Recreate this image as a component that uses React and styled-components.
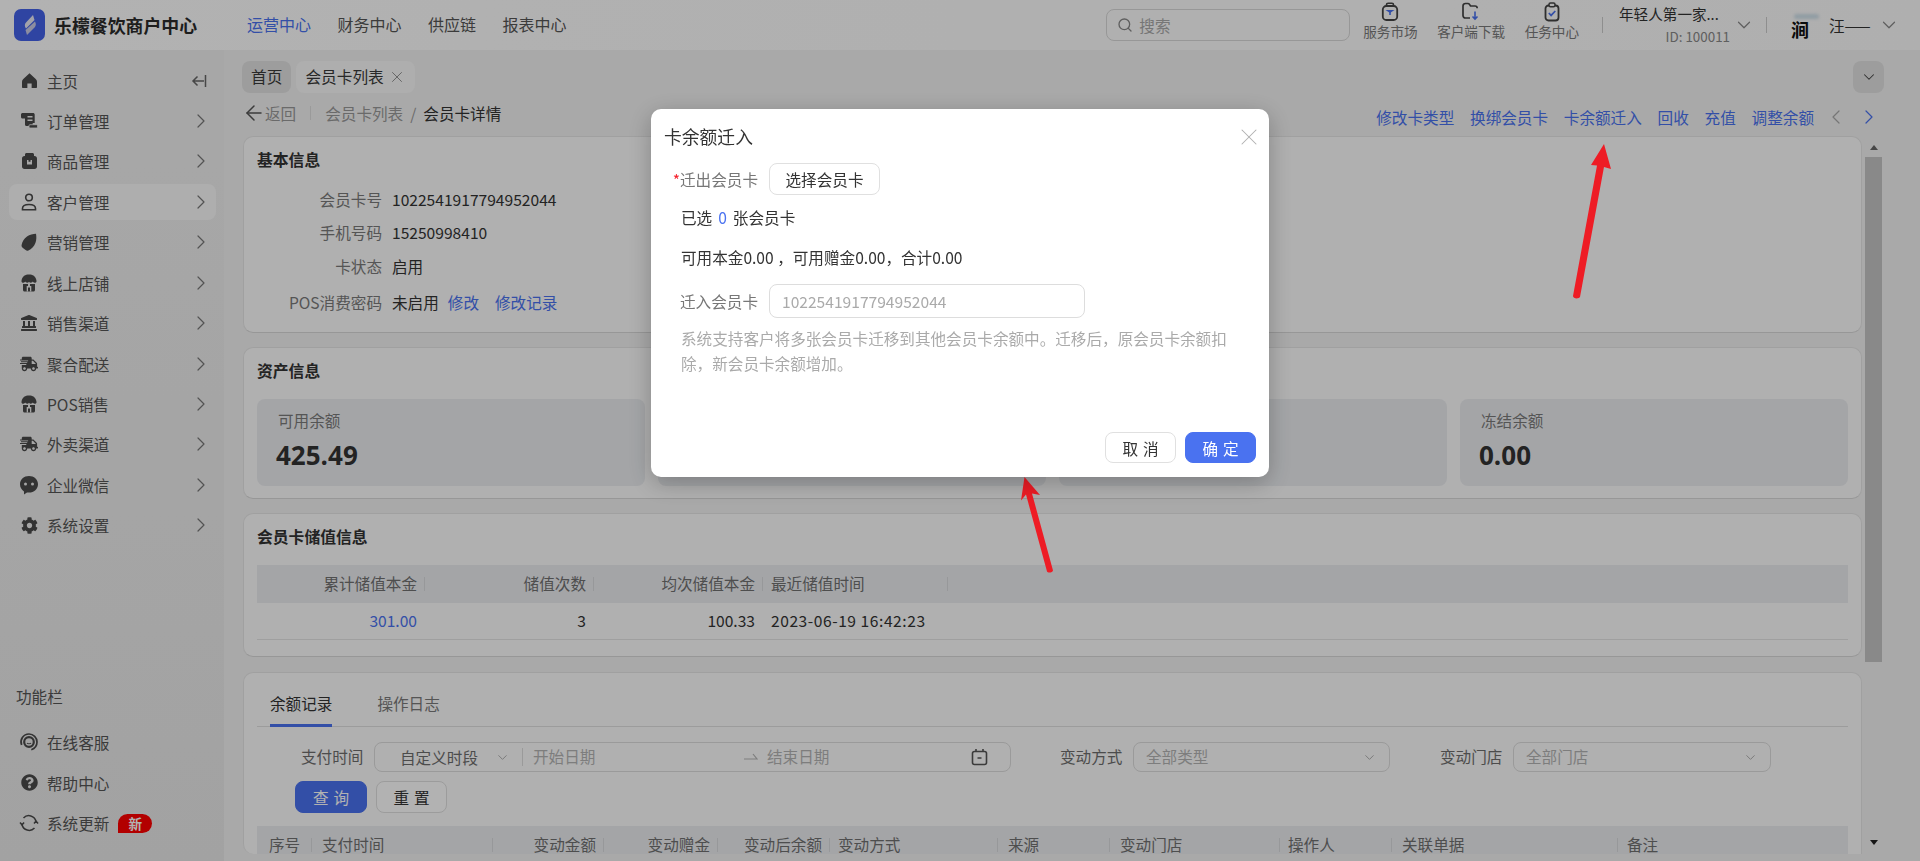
import React from "react";
import styled, { createGlobalStyle } from "styled-components";
import { ChevronRight, ChevronDown, ChevronLeft, X, Search, ArrowLeft } from "lucide-react";
import { FaShippingFast, FaCog, FaQuestionCircle, FaLandmark } from "react-icons/fa";

const BLUE = "#4a72f0";
const TINT = "#ebedf0";

const GlobalStyle = createGlobalStyle`
  html, body { margin: 0; padding: 0; height: 861px; overflow: hidden; }
  body { font-family: "Noto Sans CJK SC", "Liberation Sans", sans-serif; font-size: 15.6px; color: #333; }
  * { box-sizing: border-box; }
`;

const Page = styled.div`
  width: 1920px;
  height: 861px;
  display: flex;
  flex-direction: column;
  overflow: hidden;
  background: #f2f2f2;
`;

/* top bar */
const TopBar = styled.header`
  height: 50px;
  flex: none;
  display: flex;
  align-items: center;
  padding: 0 20px 0 14px;
  background: linear-gradient(90deg, #fff, #fbfbfb);
`;
const Logo = styled.svg`
  width: 31px;
  height: 32px;
  flex: none;
`;
const Brand = styled.div`
  margin-left: 9px;
  width: 143px;
  font-size: 17.9px;
  font-weight: 700;
  line-height: 26px;
  white-space: nowrap;
  color: #2b2b2b;
`;
const Nav = styled.nav`
  margin-left: 50px;
  display: flex;
  gap: 26.5px;
  flex: 1;
  margin-top: -3px;
`;
const NavItem = styled.span`
  font-size: 16px;
  line-height: 24px;
  color: ${(p) => (p.$active ? BLUE : "#555")};
`;
const SearchBox = styled.div`
  width: 244px;
  height: 32px;
  display: flex;
  align-items: center;
  gap: 6px;
  padding-left: 10px;
  border: 1px solid #d8d8d8;
  border-radius: 8px;
  color: #aaa;
  font-size: 15.6px;
  svg { color: #888; }
`;
const Tools = styled.div`
  margin-left: 13px;
  display: flex;
  gap: 19.5px;
  align-self: flex-start;
  padding-top: 2px;
`;
const Tool = styled.div`
  display: flex;
  flex-direction: column;
  align-items: center;
  font-size: 13.6px;
  line-height: 18px;
  color: #7a7a7a;
  white-space: nowrap;
  svg { display: block; height: 20px; }
`;
const VLine = styled.span`
  width: 1px;
  height: 16px;
  flex: none;
  background: #ccc;
  margin-left: ${(p) => p.$left || 0}px;
`;
const Shop = styled.div`
  margin-left: 16px;
  width: 111px;
  flex: none;
  display: flex;
  flex-direction: column;
  font-size: 14.6px;
  line-height: 22px;
  color: #333;
  white-space: nowrap;
`;
const ShopId = styled.span`
  text-align: right;
  font-size: 13.4px;
  color: #888;
`;
const Avatar = styled.div`
  margin-left: 22px;
  width: 31px;
  height: 26px;
  flex: none;
  position: relative;
  padding: 8px 0 0 2px;
  font-size: 18px;
  font-weight: 700;
  line-height: 18px;
  color: #111;
  &::before {
    content: "";
    position: absolute;
    top: 2px;
    left: 5px;
    width: 25px;
    height: 5px;
    border-radius: 4px;
    background: #cfe0ea;
    filter: blur(1.5px);
  }
`;
const UserName = styled.span`
  margin-left: 9px;
  width: 47px;
  flex: none;
  font-size: 15.6px;
  white-space: nowrap;
  color: #333;
`;
const DownIcon = styled(ChevronDown)`
  flex: none;
  color: #888;
  margin-left: ${(p) => p.$left || 0}px;
`;

/* sidebar */
const Body = styled.div`
  flex: 1;
  display: flex;
  min-height: 0;
`;
const Sidebar = styled.aside`
  width: 224px;
  flex: none;
  display: flex;
  flex-direction: column;
  justify-content: space-between;
  padding: 12.5px 8px 20px 9px;
  background: linear-gradient(#f0f0f0, #e9e9e9);
`;
const Menu = styled.div`
  display: flex;
  flex-direction: column;
  gap: 4.45px;
`;
const MenuItem = styled.div`
  height: 36px;
  display: flex;
  align-items: center;
  padding: 0 3px 0 10px;
  border-radius: 8px;
  background: ${(p) => (p.$active ? "#f9f9f9" : "transparent")};
  color: #555;
  font-size: 15.6px;
`;
const MenuIcon = styled.span`
  width: 20px;
  height: 20px;
  display: flex;
  align-items: center;
  justify-content: center;
  color: #4a4a4a;
  svg { display: block; }
`;
const MenuLabel = styled.span`
  margin-left: 8px;
  flex: 1;
  white-space: nowrap;
  display: flex;
  align-items: center;
  gap: 9px;
`;
const MenuArrow = styled(ChevronRight)`
  color: #777;
`;
const CollapseIcon = styled.svg`
  width: 16px;
  height: 14px;
  margin-right: 6px;
`;
const FooterTitle = styled.div`
  padding-left: 7px;
  margin-bottom: 17px;
  font-size: 15.6px;
  line-height: 22px;
  color: #555;
`;
const NewBadge = styled.span`
  width: 34px;
  height: 19px;
  display: flex;
  align-items: center;
  justify-content: center;
  border-radius: 10px 10px 10px 0;
  background: #ff0000;
  color: #fff;
  font-size: 13.6px;
  font-weight: 700;
`;

/* main */
const Main = styled.main`
  flex: 1;
  min-width: 0;
  padding-left: 18px;
  display: flex;
  flex-direction: column;
`;
const PageTabs = styled.div`
  margin-top: 11px;
  height: 32px;
  flex: none;
  display: flex;
  gap: 5px;
  padding-right: 36px;
`;
const PageTab = styled.div`
  height: 32px;
  display: flex;
  align-items: center;
  gap: 4px;
  padding: 0 9px 2px;
  border-radius: 8px;
  background: ${(p) => (p.$active ? "#f9f9f9" : "#e1e1e1")};
  font-size: 15.7px;
  color: #3a3a3a;
  svg { color: #888; margin-top: 2px; }
`;
const TabsMore = styled.div`
  margin-left: auto;
  width: 31px;
  height: 32px;
  display: flex;
  align-items: center;
  justify-content: center;
  border-radius: 8px;
  background: #e1e1e1;
  color: #444;
`;
const Crumbs = styled.div`
  height: 43px;
  flex: none;
  display: flex;
  align-items: center;
  padding: 0 39px 4px 0;
`;
const Back = styled.span`
  display: flex;
  align-items: center;
  gap: 0;
  color: #999;
  svg { color: #555; margin-right: -1px; }
`;
const CrumbLine = styled.span`
  width: 1px;
  height: 14px;
  margin: 0 14px;
  background: #ddd;
`;
const CrumbLink = styled.span`
  color: ${(p) => (p.$current ? "#333" : "#999")};
  margin-right: ${(p) => (p.$current ? 0 : 7)}px;
`;
const Actions = styled.div`
  margin-left: auto;
  display: flex;
  align-items: center;
  gap: 15.8px;
  padding-top: 9px;
`;
const Link = styled.a`
  color: ${BLUE};
  white-space: nowrap;
  margin-left: ${(p) => p.$left || 0}px;
`;
const Pager = styled.span`
  display: flex;
  gap: 9px;
  margin-left: -5.8px;
`;
const Viewport = styled.div`
  height: 718px;
  flex: none;
  display: flex;
  padding-left: 1px;
`;
const Scroller = styled.div`
  width: 1619px;
  flex: none;
  overflow: hidden;
  display: flex;
  flex-direction: column;
  gap: 14px;
`;
const FakeScroll = styled.div`
  width: 17px;
  margin-left: 3px;
  position: relative;
  display: flex;
  flex-direction: column;
  align-items: center;
`;
const ScrollArrow = styled.span`
  width: 0;
  height: 0;
  margin: ${(p) => (p.$down ? "auto 0 9px" : "9px 0 0")};
  border-left: 4.5px solid transparent;
  border-right: 4.5px solid transparent;
  border-${(p) => (p.$down ? "top" : "bottom")}: 5px solid ${(p) => (p.$down ? "#222" : "#666")};
`;
const ScrollThumb = styled.span`
  width: 17px;
  height: 505px;
  margin-top: 7px;
  background: #c4c4c4;
`;
const Card = styled.section`
  height: ${(p) => p.$h}px;
  flex: none;
  margin-top: ${(p) => p.$top || 0}px;
  padding: 0 13px;
  background: #fcfcfc;
  border: 1px solid #e6e6e6;
  border-bottom: ${(p) => (p.$open ? "none" : "1px solid #d8d8d8")};
  border-radius: ${(p) => (p.$open ? "10px 10px 0 10px" : "10px")};
`;
const CardTitle = styled.h3`
  margin: 11px 0 16px;
  font-size: 15.8px;
  font-weight: 700;
  line-height: 24px;
  color: #333;
`;
const InfoList = styled.dl`
  margin: -6.500px 0 0;
  padding-top: 1px;
`;
const InfoRow = styled.div`
  display: grid;
  grid-template-columns: 125px 1fr;
  column-gap: 10px;
  height: ${(p) => p.$h}px;
  align-items: center;
`;
const InfoLabel = styled.dt`
  text-align: right;
  color: #7a7a7a;
  white-space: nowrap;
`;
const InfoValue = styled.dd`
  margin: 0;
  color: #333;
  display: flex;
  gap: 9px;
`;
const Stats = styled.div`
  display: grid;
  grid-template-columns: repeat(4, 1fr);
  gap: 13px;
`;
const Stat = styled.div`
  height: 87px;
  padding: 10px 21px;
  background: ${TINT};
  border-radius: 8px;
`;
const StatLabel = styled.div`
  line-height: 22px;
  color: #7a7a7a;
`;
const StatValue = styled.div`
  margin-top: 6px;
  margin-left: -2px;
  font-family: "Open Sans", "Noto Sans CJK SC", sans-serif;
  font-size: 26px;
  font-weight: 700;
  line-height: 36px;
  color: #333;
`;
const Thead = styled.div`
  display: grid;
  grid-template-columns: ${(p) => p.$cols};
  height: ${(p) => p.$h}px;
  padding-top: ${(p) => p.$top || 0}px;
  background: ${TINT};
  color: #707070;
`;
const Tbody = styled.div`
  display: grid;
  grid-template-columns: ${(p) => p.$cols};
  height: 37px;
  align-items: center;
  border-bottom: 1px solid #e4e4e4;
  color: #333;
`;
const Th = styled.div`
  height: 100%;
  position: relative;
  display: flex;
  align-items: center;
  justify-content: ${(p) => (p.$right ? "flex-end" : "flex-start")};
  padding: 0 8px 2px ${(p) => (p.$pad === undefined ? 8 : p.$pad)}px;
  line-height: 16px;
  white-space: nowrap;
  &::after {
    content: "";
    display: ${(p) => (p.$last ? "none" : "block")};
    position: absolute;
    right: 0;
    top: 50%;
    width: 1px;
    height: 14px;
    margin-top: -7px;
    background: #d8dadd;
  }
`;
const Td = styled.div`
  padding: 0 8px 2px;
  text-align: ${(p) => (p.$right ? "right" : "left")};
  color: ${(p) => (p.$link ? BLUE : "#333")};
  letter-spacing: ${(p) => p.$track || 0}px;
  white-space: nowrap;
`;
const TabRow = styled.div`
  height: 54px;
  display: flex;
  align-items: flex-end;
  gap: 45px;
  padding-left: 13px;
  border-bottom: 1px solid #e0e0e0;
`;
const Tab = styled.div`
  height: 40px;
  margin-bottom: -1px;
  padding-top: 4px;
  line-height: 24px;
  border-bottom: 3px solid ${(p) => (p.$active ? BLUE : "transparent")};
  color: ${(p) => (p.$active ? "#333" : "#7a7a7a")};
`;
const Filters = styled.div`
  height: 30px;
  margin-top: 15px;
  padding-left: 44px;
  display: flex;
  align-items: center;
  line-height: 20px;
`;
const FilterLabel = styled.label`
  width: 65px;
  flex: none;
  padding-bottom: 2px;
  white-space: nowrap;
  color: #6e6e6e;
  margin-left: ${(p) => p.$left || 0}px;
`;
const RangeBox = styled.div`
  width: 637px;
  height: 30px;
  margin-left: 8px;
  display: flex;
  align-items: center;
  border: 1px solid #ddd;
  border-radius: 8px;
`;
const Preset = styled.div`
  width: 148px;
  height: 18px;
  padding-left: 25px;
  flex: none;
  display: flex;
  align-items: center;
  color: #6e6e6e;
  border-right: 1px solid #ddd;
  white-space: nowrap;
  line-height: 18px;
  svg { color: #aaa; margin-left: 17px; }
`;
const Placeholder = styled.span`
  color: #b4b4b4;
  white-space: nowrap;
  flex: ${(p) => (p.$grow ? 1 : "none")};
  width: ${(p) => (p.$w ? `${p.$w}px` : "auto")};
  padding: 0 0 2px ${(p) => p.$pad || 0}px;
`;
const RangeArrow = styled.svg`
  width: 14px;
  height: 10px;
  flex: none;
`;
const CalendarIcon = styled.svg`
  width: 17px;
  height: 18px;
  flex: none;
  margin-right: 22px;
`;
const SelectBox = styled.div`
  width: ${(p) => p.$w}px;
  height: 30px;
  margin-left: 8px;
  padding: 0 12px;
  display: flex;
  align-items: center;
  justify-content: space-between;
  border: 1px solid #ddd;
  border-radius: 8px;
  svg { color: #aaa; }
`;
const FilterButtons = styled.div`
  margin-top: 9px;
  margin-bottom: 13px;
  padding-left: 38px;
  display: flex;
  gap: 9px;
`;
const Button = styled.button`
  width: ${(p) => p.$w || 72}px;
  height: ${(p) => p.$h || 32}px;
  padding: 0 0 0 ${(p) => p.$space || 0}px;
  flex: none;
  font: inherit;
  letter-spacing: ${(p) => p.$space || 0}px;
  white-space: nowrap;
  border-radius: 8px;
  border: 1px solid ${(p) => (p.$primary ? BLUE : "#e0e0e0")};
  background: ${(p) => (p.$primary ? BLUE : "#fff")};
  color: ${(p) => (p.$primary ? "#fff" : "#333")};
`;

/* dialog */
const Mask = styled.div`
  position: fixed;
  inset: 0;
  z-index: 10;
  padding: 109px 0 0 651px;
  background: rgba(0, 0, 0, 0.3);
`;
const Dialog = styled.div`
  position: relative;
  z-index: 1;
  width: 618px;
  height: 368px;
  display: flex;
  flex-direction: column;
  padding: 14px 13px 14px 13px;
  background: #fff;
  border-radius: 10px;
  box-shadow: 0 6px 24px rgba(0, 0, 0, 0.25);
`;
const DialogHead = styled.div`
  height: 26px;
  flex: none;
  display: flex;
  align-items: center;
  justify-content: space-between;
  font-size: 17.8px;
  line-height: 26px;
  color: #333;
  svg { color: #b0b0b0; margin-right: -7px; margin-top: 2px; }
`;
const FormRow = styled.div`
  display: flex;
  align-items: center;
  height: ${(p) => p.$h}px;
  margin-top: ${(p) => p.$top}px;
`;
const FormLabel = styled.span`
  width: 94px;
  flex: none;
  text-align: right;
  color: #777;
  white-space: nowrap;
  margin-right: 11px;
  em { color: #f5222d; font-style: normal; }
`;
const FormInput = styled.div`
  width: 316px;
  height: 34px;
  padding-left: 12px;
  display: flex;
  align-items: center;
  border: 1px solid #ddd;
  border-radius: 8px;
  color: #aaa;
`;
const Note = styled.div`
  margin-top: ${(p) => p.$top}px;
  padding-left: 17px;
  line-height: 22px;
  color: #333;
  white-space: nowrap;
`;
const Count = styled.span`
  color: ${BLUE};
  margin: 0 6px;
`;
const Help = styled.div`
  margin-top: 7.500px;
  padding-left: 17px;
  width: 575px;
  line-height: 25px;
  color: #aaa;
`;
const DialogFoot = styled.div`
  margin-top: auto;
  display: flex;
  justify-content: flex-end;
  gap: 9px;
`;
const Arrow = styled.svg`
  position: absolute;
  top: 0;
  left: 0;
  width: 1920px;
  height: 861px;
  pointer-events: none;
`;

const paint = "currentColor";

const HomeIcon = () => (
  <svg width="15" height="15" viewBox="0 0 14 14" fill={paint}>
    <path d="M7 .3l5.800 5.400c.8.700 1.200 1.500 1.200 2.400V13c0 .6-.4 1-1 1H9V9.800H5V14H1c-.6 0-1-.4-1-1V8.100c0-.9.4-1.700 1.200-2.400z" />
  </svg>
);
const OrderIcon = () => (
  <svg width="18" height="17" viewBox="0 0 18 17" fill={paint}>
    <path d="M1 2.500C1 1.500 1.800 1 2.700 1H13c1 0 1.700.7 1.700 1.700V11h-2V14H6.500C5.500 14 5 13.300 5 12.500V6.500H2.500C1.600 6.500 1 5.900 1 5z" />
    <path d="M7.500 4h5v1.600h-5zM7.500 7.400h5V9h-5z" fill="#efefef" />
    <rect x="9" y="12.700" width="8.500" height="3.300" rx="1" stroke="#efefef" strokeWidth=".8" />
  </svg>
);
const BagIcon = () => (
  <svg width="15" height="16" viewBox="0 0 15 16" fill={paint}>
    <path fillRule="evenodd" d="M3 1.500C3 .7 3.700 0 4.500 0h6c.8 0 1.500.7 1.500 1.500V3h.5C14 3 15 4 15 5.500v8c0 1.400-1 2.500-2.500 2.500h-10C1 16 0 14.900 0 13.500v-8C0 4 1 3 2.500 3H3zM5 7v4.500h5V7H8.500v1.800h-2V7z" />
  </svg>
);
const PersonIcon = () => (
  <svg width="16" height="18" viewBox="0 0 16 18" fill="none" stroke={paint} strokeWidth="1.600">
    <circle cx="8" cy="4.500" r="3.300" />
    <path d="M1.500 16.700v-1.200c0-2.400 2.200-4 6.500-4s6.500 1.600 6.500 4v1.200z" />
  </svg>
);
const TagIcon = () => (
  <svg width="16" height="18" viewBox="0 0 16 18" fill={paint}>
    <path d="M15 .8c.5 3 .6 6-.6 9.300-1.300 3.300-3.900 6.200-7 7.400-1 .4-2 .2-2.800-.4l-3-2.400C.7 14 .4 13 .6 12 1.300 8.500 3 5.500 6 3.500 8.700 1.700 12 .9 15 .8z" />
  </svg>
);
const StoreIcon = () => (
  <svg width="18" height="18" viewBox="0 0 18 18" fill={paint}>
    <path d="M9 .5c3.700 0 6.700 1.600 7.500 6.200.2 1.300-.7 2.100-1.800 2.100-1 0-1.600-.6-1.900-1.200-.4.700-1.100 1.200-2 1.200-.8 0-1.400-.4-1.800-1.100-.4.700-1 1.100-1.800 1.100-.9 0-1.600-.5-2-1.200-.3.600-.9 1.200-1.900 1.200-1.100 0-2-.8-1.800-2.100C2.300 2.100 5.300.5 9 .5z" />
    <path d="M3 10h5v7.500H4.500c-.8 0-1.500-.7-1.500-1.500zM10 10h5v6c0 .8-.7 1.500-1.500 1.500H10z" />
    <path d="M6.700 12h4.600v5.500H6.700z" fill="#efefef" />
    <path d="M8 13.500h2v4H8z" />
  </svg>
);
const WeChatIcon = () => (
  <svg width="20" height="20" viewBox="0 0 20 20" fill={paint}>
    <path fillRule="evenodd" d="M10 1c5 0 9 3.500 9 8.300 0 4.800-4 8.300-9 8.300-.7 0-1.400-.1-2-.2L5 19.500v-3.100C2.500 14.900 1 12.300 1 9.300 1 4.500 5 1 10 1zM6.500 7.500a1.500 1.500 0 100 3 1.500 1.500 0 000-3zm7 0a1.500 1.500 0 100 3 1.500 1.500 0 000-3z" />
  </svg>
);
const ServiceIcon = () => (
  <svg width="20" height="20" viewBox="0 0 20 20" fill="none" stroke={paint} strokeWidth="1.700">
    <path d="M2.600 13A8 8 0 0 1 10 2a8 8 0 0 1 8 8c0 3.700-2.300 6.500-5.700 7.700" />
    <circle cx="10" cy="10" r="4.800" strokeWidth="2.200" />
    <path d="M8 11c.7 1 3.300 1 4 0" strokeWidth="1.100" />
  </svg>
);
const SyncIcon = () => (
  <svg width="20" height="20" viewBox="0 0 20 20" fill="none" stroke={paint} strokeWidth="1.500">
    <path d="M3 11.500A7.300 7.300 0 0 0 15.500 15M17 8.500A7.300 7.300 0 0 0 4.500 5" />
    <path d="M1 9.500l2 2.300 2.100-2.300M15 10.500l2-2.300 2.100 2.300" />
  </svg>
);

const menuItems = [
  { label: "主页", icon: HomeIcon, collapse: true },
  { label: "订单管理", icon: OrderIcon },
  { label: "商品管理", icon: BagIcon },
  { label: "客户管理", icon: PersonIcon, active: true },
  { label: "营销管理", icon: TagIcon },
  { label: "线上店铺", icon: StoreIcon },
  { label: "销售渠道", icon: () => <FaLandmark size={16} /> },
  { label: "聚合配送", icon: () => <FaShippingFast size={18} /> },
  { label: "POS销售", icon: StoreIcon },
  { label: "外卖渠道", icon: () => <FaShippingFast size={18} /> },
  { label: "企业微信", icon: WeChatIcon },
  { label: "系统设置", icon: () => <FaCog size={17} /> },
];

const balanceCols = "168px 169px 169px 185px 1fr";
const recordCols = "55px 181px 111px 114px 112px 168px 112px 170px 112px 226px 1fr";

const recordHeads = [
  { label: "序号", pad: 12 },
  { label: "支付时间", pad: 10 },
  { label: "变动金额", right: true },
  { label: "变动赠金", right: true },
  { label: "变动后余额", right: true },
  { label: "变动方式" },
  { label: "来源", pad: 10 },
  { label: "变动门店", pad: 10 },
  { label: "操作人" },
  { label: "关联单据", pad: 10 },
  { label: "备注", pad: 9, last: true },
];

const info = [
  { label: "会员卡号", value: "1022541917794952044", h: 33 },
  { label: "手机号码", value: "15250998410", h: 33 },
  { label: "卡状态", value: "启用", h: 35 },
];

const App = () => (
  <Page>
    <GlobalStyle />
    <TopBar>
      <Logo viewBox="0 0 31 32">
        <rect width="31" height="32" rx="7" fill="#4462e8" />
        <path d="M19 6l1.500 5-8.500 8.500c-1.500-2-1.600-4.500 0-6z" fill="#e8e8f4" />
        <path d="M21 12.500c1.300 2.200 1 4.500-.5 6L13 26l-1.500-5z" fill="#c9cbe6" />
      </Logo>
      <Brand>乐檬餐饮商户中心</Brand>
      <Nav>
        <NavItem $active>运营中心</NavItem>
        <NavItem>财务中心</NavItem>
        <NavItem>供应链</NavItem>
        <NavItem>报表中心</NavItem>
      </Nav>
      <SearchBox>
        <Search size={16} strokeWidth={2} />
        搜索
      </SearchBox>
      <Tools>
        <Tool>
          <svg width="18" height="20" viewBox="0 0 18 20" fill="none">
            <path d="M5.500 4V2.800c0-.9.700-1.600 1.600-1.600h3.800c.9 0 1.600.7 1.600 1.600V4" stroke="#444" strokeWidth="1.600" />
            <rect x="1.800" y="4" width="14.400" height="14" rx="3.500" stroke="#444" strokeWidth="1.800" />
            <path d="M4.500 8h9l-4.500 3z" fill={BLUE} />
            <path d="M9 10v3" stroke={BLUE} strokeWidth="1.600" />
          </svg>
          服务市场
        </Tool>
        <Tool>
          <svg width="20" height="20" viewBox="0 0 20 20" fill="none">
            <path d="M9 16H4.500C3 16 2 15 2 13.500V4c0-1.500 1-2.500 2.500-2.500h2.300c.7 0 1.300.3 1.700.9L9.500 4h4.500c1.200 0 2.200.9 2.200 2.200" stroke="#444" strokeWidth="1.700" />
            <path d="M14 9.500v7M11.500 14.500L14 17l2.500-2.500" stroke={BLUE} strokeWidth="1.600" />
          </svg>
          客户端下载
        </Tool>
        <Tool>
          <svg width="16" height="20" viewBox="0 0 16 20" fill="none">
            <rect x="1.500" y="3.500" width="13" height="15" rx="3" stroke="#444" strokeWidth="1.800" />
            <rect x="5" y="1" width="6" height="3.800" rx="1.500" fill="#fbfbfb" stroke="#444" strokeWidth="1.500" />
            <path d="M4.800 11l2.300 2.400 4.200-4.400" stroke={BLUE} strokeWidth="1.700" />
          </svg>
          任务中心
        </Tool>
      </Tools>
      <VLine $left={23} />
      <Shop>
        <span>年轻人第一家...</span>
        <ShopId>ID: 100011</ShopId>
      </Shop>
      <DownIcon size={22} strokeWidth={1.300} $left={3} />
      <VLine $left={11} />
      <Avatar>涧</Avatar>
      <UserName>汪——</UserName>
      <DownIcon size={22} strokeWidth={1.300} $left={2} />
    </TopBar>

    <Body>
      <Sidebar>
        <Menu>
          {menuItems.map(({ label, icon: Icon, active, collapse }) => (
            <MenuItem key={label} $active={active}>
              <MenuIcon>
                <Icon />
              </MenuIcon>
              <MenuLabel>{label}</MenuLabel>
              {collapse ? (
                <CollapseIcon viewBox="0 0 16 14" fill="none" stroke="#666" strokeWidth="1.500">
                  <path d="M14.500 1v12M13 7H2M6.500 2.500L2 7l4.500 4.500" />
                </CollapseIcon>
              ) : (
                <MenuArrow size={24} strokeWidth={1.200} />
              )}
            </MenuItem>
          ))}
        </Menu>
        <div>
          <FooterTitle>功能栏</FooterTitle>
          <Menu>
            <MenuItem>
              <MenuIcon>
                <ServiceIcon />
              </MenuIcon>
              <MenuLabel>在线客服</MenuLabel>
            </MenuItem>
            <MenuItem>
              <MenuIcon>
                <FaQuestionCircle size={17} />
              </MenuIcon>
              <MenuLabel>帮助中心</MenuLabel>
            </MenuItem>
            <MenuItem>
              <MenuIcon>
                <SyncIcon />
              </MenuIcon>
              <MenuLabel>
                系统更新
                <NewBadge>新</NewBadge>
              </MenuLabel>
            </MenuItem>
          </Menu>
        </div>
      </Sidebar>

      <Main>
        <PageTabs>
          <PageTab>首页</PageTab>
          <PageTab $active>
            会员卡列表
            <X size={18} strokeWidth={1.200} />
          </PageTab>
          <TabsMore>
            <ChevronDown size={18} strokeWidth={1.400} />
          </TabsMore>
        </PageTabs>
        <Crumbs>
          <Back>
            <ArrowLeft size={24} strokeWidth={1.500} />
            返回
          </Back>
          <CrumbLine />
          <CrumbLink>会员卡列表</CrumbLink>
          <CrumbLink>/</CrumbLink>
          <CrumbLink $current>会员卡详情</CrumbLink>
          <Actions>
            <Link>修改卡类型</Link>
            <Link>换绑会员卡</Link>
            <Link>卡余额迁入</Link>
            <Link>回收</Link>
            <Link>充值</Link>
            <Link>调整余额</Link>
            <Pager>
              <ChevronLeft size={24} strokeWidth={1.200} color="#aaa" />
              <ChevronRight size={24} strokeWidth={1.200} color={BLUE} />
            </Pager>
          </Actions>
        </Crumbs>

        <Viewport>
          <Scroller>
            <Card $h={197}>
              <CardTitle>基本信息</CardTitle>
              <InfoList>
                {info.map(({ label, value, h }) => (
                  <InfoRow key={label} $h={h}>
                    <InfoLabel>{label}</InfoLabel>
                    <InfoValue>{value}</InfoValue>
                  </InfoRow>
                ))}
                <InfoRow $h={36}>
                  <InfoLabel>POS消费密码</InfoLabel>
                  <InfoValue>
                    未启用
                    <Link>修改</Link>
                    <Link $left={7}>修改记录</Link>
                  </InfoValue>
                </InfoRow>
              </InfoList>
            </Card>

            <Card $h={152}>
              <CardTitle>资产信息</CardTitle>
              <Stats>
                <Stat>
                  <StatLabel>可用余额</StatLabel>
                  <StatValue>425.49</StatValue>
                </Stat>
                <Stat>
                  <StatLabel>可用本金</StatLabel>
                </Stat>
                <Stat>
                  <StatLabel>可用赠金</StatLabel>
                </Stat>
                <Stat>
                  <StatLabel>冻结余额</StatLabel>
                  <StatValue>0.00</StatValue>
                </Stat>
              </Stats>
            </Card>

            <Card $h={144}>
              <CardTitle>会员卡储值信息</CardTitle>
              <Thead $cols={balanceCols} $h={38}>
                <Th $right>累计储值本金</Th>
                <Th $right>储值次数</Th>
                <Th $right>均次储值本金</Th>
                <Th>最近储值时间</Th>
                <Th $last />
              </Thead>
              <Tbody $cols={balanceCols}>
                <Td $right $link>
                  301.00
                </Td>
                <Td $right>3</Td>
                <Td $right>100.33</Td>
                <Td $track={0.55}>2023-06-19 16:42:23</Td>
                <Td />
              </Tbody>
            </Card>

            <Card $h={182} $top={1} $open>
              <TabRow>
                <Tab $active>余额记录</Tab>
                <Tab>操作日志</Tab>
              </TabRow>
              <Filters>
                <FilterLabel>支付时间</FilterLabel>
                <RangeBox>
                  <Preset>
                    自定义时段
                    <ChevronDown size={15} strokeWidth={1.500} />
                  </Preset>
                  <Placeholder $w={221} $pad={10}>
                    开始日期
                  </Placeholder>
                  <RangeArrow viewBox="0 0 14 10" fill="none" stroke="#b4b4b4" strokeWidth="1.200">
                    <path d="M0 7h13L9 2" />
                  </RangeArrow>
                  <Placeholder $grow $pad={9}>
                    结束日期
                  </Placeholder>
                  <CalendarIcon viewBox="0 0 17 18" fill="none" stroke="#555" strokeWidth="1.600">
                    <rect x="1.500" y="3.500" width="14" height="13" rx="2" />
                    <path d="M5 1v3M12 1v3M6.500 10h4" />
                  </CalendarIcon>
                </RangeBox>
                <FilterLabel $left={49}>变动方式</FilterLabel>
                <SelectBox $w={257}>
                  <Placeholder>全部类型</Placeholder>
                  <ChevronDown size={15} strokeWidth={1.500} />
                </SelectBox>
                <FilterLabel $left={50}>变动门店</FilterLabel>
                <SelectBox $w={258}>
                  <Placeholder>全部门店</Placeholder>
                  <ChevronDown size={15} strokeWidth={1.500} />
                </SelectBox>
              </Filters>
              <FilterButtons>
                <Button $primary $space={5}>
                  查询
                </Button>
                <Button $w={71} $space={5}>
                  重置
                </Button>
              </FilterButtons>
              <Thead $cols={recordCols} $h={28} $top={10}>
                {recordHeads.map(({ label, right, pad, last }) => (
                  <Th key={label} $right={right} $pad={pad} $last={last}>
                    {label}
                  </Th>
                ))}
              </Thead>
            </Card>
          </Scroller>
          <FakeScroll>
            <ScrollArrow />
            <ScrollThumb />
            <ScrollArrow $down />
          </FakeScroll>
        </Viewport>
      </Main>
    </Body>

    <Mask>
      <Dialog>
        <DialogHead>
          卡余额迁入
          <X size={28} strokeWidth={0.900} />
        </DialogHead>
        <FormRow $h={32} $top={14}>
          <FormLabel>
            <em>*</em>迁出会员卡
          </FormLabel>
          <Button $w={111}>选择会员卡</Button>
        </FormRow>
        <Note $top={10.5}>
          已选<Count>0</Count>张会员卡
        </Note>
        <Note $top={18}>可用本金0.00 ，可用赠金0.00，合计0.00</Note>
        <FormRow $h={34} $top={16.5}>
          <FormLabel>迁入会员卡</FormLabel>
          <FormInput>1022541917794952044</FormInput>
        </FormRow>
        <Help>系统支持客户将多张会员卡迁移到其他会员卡余额中。迁移后，原会员卡余额扣除，新会员卡余额增加。</Help>
        <DialogFoot>
          <Button $w={71} $h={31} $space={5}>
            取消
          </Button>
          <Button $w={71} $h={31} $space={5} $primary>
            确定
          </Button>
        </DialogFoot>
      </Dialog>
      <Arrow viewBox="0 0 1920 861" fill="#ee1c25">
        <path d="M1604 144L1611 169 1604 167 1580 297C1579 299 1573 299 1573 296L1597 165.500 1591 165z" />
        <path d="M1024.500 477l15.500 18-8-1.500 21 77c0 2-5 3-6 1l-21-77-5 6z" />
      </Arrow>
    </Mask>
  </Page>
);

export default App;
